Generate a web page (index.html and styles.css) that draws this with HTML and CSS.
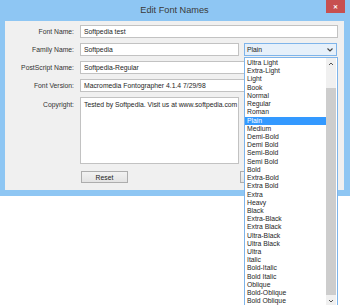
FILE: index.html
```html
<!DOCTYPE html>
<html>
<head>
<meta charset="utf-8">
<link rel="stylesheet" href="styles.css">
</head>
<body>
<div class="window">
  <div class="titlebar">
    <span class="title">Edit Font Names</span>
    <span class="close">&#x2715;</span>
  </div>
  <div class="client">
    <div class="form">
      <label class="lbl">Font Name:</label>
      <div class="field full">Softpedia test</div>

      <label class="lbl">Family Name:</label>
      <div class="pair">
        <div class="field half">Softpedia</div>
        <div class="select">Plain<svg class="chev" width="6" height="4" viewBox="0 0 6 4"><path d="M0.5 0.5 L3 3 L5.5 0.5" fill="none" stroke="#444" stroke-width="1.2"/></svg></div>
      </div>

      <label class="lbl">PostScript Name:</label>
      <div class="field full">Softpedia-Regular</div>

      <label class="lbl">Font Version:</label>
      <div class="field full">Macromedia Fontographer 4.1.4 7/29/98</div>

      <label class="lbl top">Copyright:</label>
      <div class="field area">Tested by Softpedia. Visit us at www.softpedia.com</div>

      <span></span>
      <div class="buttons">
        <div class="btn">Reset</div>
        <div class="btn"></div>
      </div>
    </div>
  </div>
</div>

<div class="dropdown">
  <ul class="items">
    <li>Ultra Light</li>
    <li>Extra-Light</li>
    <li>Light</li>
    <li>Book</li>
    <li>Normal</li>
    <li>Regular</li>
    <li>Roman</li>
    <li class="sel">Plain</li>
    <li>Medium</li>
    <li>Demi-Bold</li>
    <li>Demi Bold</li>
    <li>Semi-Bold</li>
    <li>Semi Bold</li>
    <li>Bold</li>
    <li>Extra-Bold</li>
    <li>Extra Bold</li>
    <li>Extra</li>
    <li>Heavy</li>
    <li>Black</li>
    <li>Extra-Black</li>
    <li>Extra Black</li>
    <li>Ultra-Black</li>
    <li>Ultra Black</li>
    <li>Ultra</li>
    <li>Italic</li>
    <li>Bold-Italic</li>
    <li>Bold Italic</li>
    <li>Oblique</li>
    <li>Bold-Oblique</li>
    <li>Bold Oblique</li>
  </ul>
  <div class="scrollbar">
    <svg class="arrow" width="10" height="8" viewBox="0 0 10 8"><path d="M3 5 L5 3 L7 5" fill="none" stroke="#555" stroke-width="1"/></svg>
    <div class="gap"></div>
    <div class="thumb"></div>
    <svg class="arrow" width="10" height="8" viewBox="0 0 10 8"><path d="M3 3 L5 5 L7 3" fill="none" stroke="#555" stroke-width="1"/></svg>
  </div>
</div>
</body>
</html>
```

FILE: styles.css
```css
* { box-sizing: border-box; }
html, body {
  margin: 0;
  padding: 0;
  background: #ffffff;
  font-family: "Liberation Sans", Arial, sans-serif;
  font-size: 6.8px;
  color: #222;
}
.window {
  width: 350px;
  background: #8ec6f3;
  padding: 0 6px 6px 5px;
}
.titlebar {
  height: 21px;
  display: flex;
  align-items: center;
  justify-content: center;
  position: relative;
}
.title {
  font-size: 9.2px;
  color: #3a3a3a;
  margin-top: -1px;
}
.close {
  position: absolute;
  top: 0;
  right: -1px;
  width: 19px;
  height: 13px;
  background: #c75050;
  color: #fff;
  font-size: 6px;
  font-weight: bold;
  display: flex;
  align-items: center;
  justify-content: center;
}
.client {
  background: #f0f0f0;
  height: 169px;
  padding-top: 4px;
}
.form {
  display: grid;
  grid-template-columns: 69px 1fr;
  column-gap: 6px;
  row-gap: 5px;
  align-items: center;
}
.lbl {
  text-align: right;
  color: #333;
}
.lbl.top {
  align-self: start;
  padding-top: 4px;
}
.field {
  height: 13px;
  background: #fff;
  border: 1px solid #c2c2c2;
  padding: 0 3px;
  display: flex;
  align-items: center;
  white-space: nowrap;
  color: #1e1e1e;
}
.full { width: 258px; }
.half { width: 159px; }
.pair {
  display: flex;
  gap: 5px;
}
.select {
  width: 93px;
  height: 13px;
  background: #e6f0fa;
  border: 1px solid #7eb4ea;
  padding: 0 2px;
  display: flex;
  align-items: center;
  justify-content: space-between;
}
.chev { margin-right: 1px; }
.area {
  width: 159px;
  height: 67px;
  align-items: flex-start;
  padding-top: 3px;
}
.buttons {
  display: flex;
  gap: 112px;
  margin-top: 2px;
  padding-left: 1px;
}
.btn {
  width: 47px;
  height: 12px;
  border: 1px solid #adadad;
  background: linear-gradient(#f2f2f2, #e3e3e3);
  display: flex;
  align-items: center;
  justify-content: center;
  color: #222;
}
.dropdown {
  position: absolute;
  left: 244px;
  top: 57px;
  width: 94px;
  height: 260px;
  background: #fff;
  border: 1px solid #7eb4ea;
  display: flex;
}
.items {
  list-style: none;
  margin: 0;
  padding: 1px 0 0 0;
  flex: 1;
}
.items li {
  height: 8.22px;
  line-height: 8.22px;
  padding-left: 2px;
  color: #1e1e1e;
  white-space: nowrap;
}
.items li.sel {
  background: #3399ff;
  color: #fff;
}
.scrollbar {
  width: 10px;
  margin-right: 1px;
  background: #f0f0f0;
  display: flex;
  flex-direction: column;
  height: 247px;
}
.arrow { display: block; flex: none; margin-top: 2px; }
.gap { height: 20px; flex: none; }
.thumb {
  flex: 1;
  background: #cdcdcd;
}
```
